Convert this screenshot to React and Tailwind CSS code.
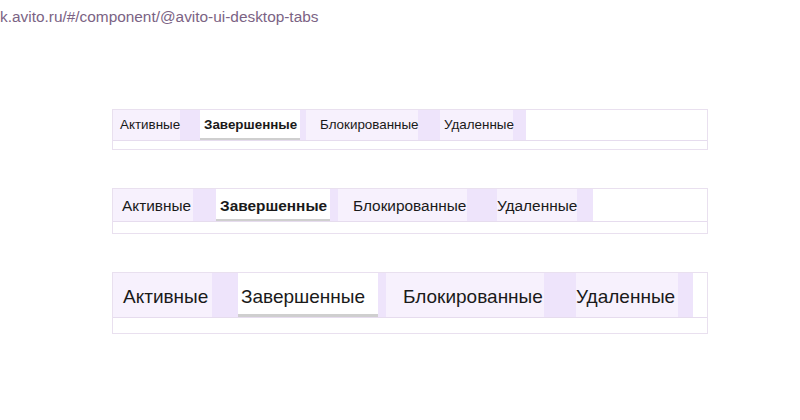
const rows = [
  {
    h: 'h-[31px]', foot: 'h-[8px]', text: 'text-[13.4px] pt-[1px]', bold: 'font-bold', line: 'h-[2px]',
    tabs: [
      { pre: 'w-0', body: 'w-[67px] pl-[7px]', post: 'w-[14px]', label: 'Активные' },
      { pre: 'w-[6px]', body: 'w-[100px] pl-[4px]', post: 'w-[6px]', label: 'Завершенные', active: true },
      { pre: 'w-0', body: 'w-[112px] pl-[14px]', post: 'w-[14px]', label: 'Блокированные' },
      { pre: 'w-[8px]', body: 'w-[73px] pl-[4px]', post: 'w-[13px]', label: 'Удаленные' },
    ],
  },
  {
    h: 'h-[33px]', foot: 'h-[11px]', text: 'text-[15.4px] pt-[2px]', bold: 'font-bold', line: 'h-[2px]',
    tabs: [
      { pre: 'w-0', body: 'w-[80px] pl-[9px]', post: 'w-[15px]', label: 'Активные' },
      { pre: 'w-[8px]', body: 'w-[114px] pl-[4px]', post: 'w-[8px]', label: 'Завершенные', active: true },
      { pre: 'w-0', body: 'w-[129px] pl-[15px]', post: 'w-[16px]', label: 'Блокированные' },
      { pre: 'w-[14px]', body: 'w-[80px] pl-0', post: 'w-[16px]', label: 'Удаленные' },
    ],
  },
  {
    h: 'h-[45px]', foot: 'h-[15px]', text: 'text-[19px] pt-[4px]', bold: 'font-normal', line: 'h-[3px]',
    tabs: [
      { pre: 'w-0', body: 'w-[99px] pl-[10px]', post: 'w-[26px]', label: 'Активные' },
      { pre: 'w-0', body: 'w-[140px] pl-[3px]', post: 'w-[8px]', label: 'Завершенные', active: true },
      { pre: 'w-0', body: 'w-[158px] pl-[17px]', post: 'w-[15px]', label: 'Блокированные' },
      { pre: 'w-[17px]', body: 'w-[102px] pl-0', post: 'w-[15px]', label: 'Удаленные' },
    ],
  },
]

function TabRow({ row }) {
  return (
    <div className="w-[596px] border border-[#e9e0ef] bg-white">
      <div className={`flex ${row.h} border-b border-[#e6dcee]`}>
        {row.tabs.map((t) => (
          <div key={t.label} className="flex h-full">
            <div className={`${t.pre} h-full bg-[#eee4fb]`} />
            <div
              className={`${t.body} relative flex h-full items-center whitespace-nowrap text-[#1a1a1a] ${row.text} ${
                t.active ? `bg-white ${row.bold}` : 'bg-[#f7f1fd]'
              }`}
            >
              {t.label}
              {t.active && <div className={`absolute bottom-0 left-0 right-0 ${row.line} bg-[#cfcfcf]`} />}
            </div>
            <div className={`${t.post} h-full bg-[#eee4fb]`} />
          </div>
        ))}
      </div>
      <div className={row.foot} />
    </div>
  )
}

export default function App() {
  return (
    <div className="w-[800px] h-[420px] bg-white overflow-hidden" style={{ fontFamily: '"Liberation Sans", Arial, sans-serif' }}>
      <div className="pt-[7px] text-[15.4px] leading-[20px] text-[#7b6384]">k.avito.ru/#/component/@avito-ui-desktop-tabs</div>
      <div className="flex flex-col pl-[112px] pt-[82px] gap-[38px]">
        <TabRow row={rows[0]} />
        <TabRow row={rows[1]} />
        <TabRow row={rows[2]} />
      </div>
    </div>
  )
}
